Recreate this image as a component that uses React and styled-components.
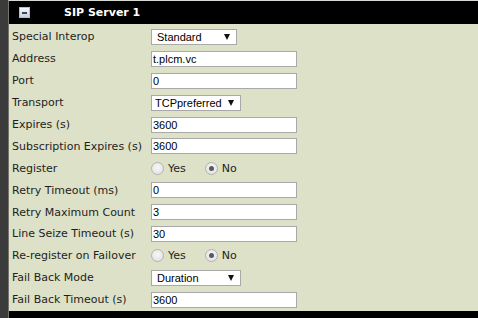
import styled, { createGlobalStyle } from "styled-components";

const Global = createGlobalStyle`
  html, body {
    margin: 0;
    padding: 0;
    background: #3b3b3b;
    height: 100%;
    overflow: hidden;
  }
`;

const Panel = styled.div`
  margin: 0 0 0 8px;
  border-top: 1px solid #d9d9d4;
  border-left: 1px solid #74746c;
  font-family: "DejaVu Sans", Verdana, sans-serif;
  font-size: 11px;
  color: #1e1e22;
`;

const Header = styled.div`
  height: 23px;
  background: #000;
  display: flex;
  align-items: center;
  padding-left: 10px;
`;

const Toggle = styled.span`
  width: 9px;
  height: 9px;
  border: 1px solid #b4bfd4;
  background: linear-gradient(#f5f7fc, #c6d0e2);
  display: flex;
  align-items: center;
  justify-content: center;

  &::after {
    content: "";
    width: 5px;
    height: 2px;
    background: #3c4459;
  }
`;

const Title = styled.span`
  color: #fff;
  font-weight: bold;
  margin-left: 34px;
`;

const Body = styled.div`
  background: #dde1c7;
  padding: 2px 0 0 3px;
`;

const Row = styled.div`
  height: 21.9px;
  display: flex;
  align-items: center;
`;

const Label = styled.span`
  width: 139px;
  flex: none;
  white-space: nowrap;
`;

const TextBox = styled.div`
  box-sizing: border-box;
  width: 146px;
  height: 16px;
  border: 1px solid #a9a9a9;
  background: #fff;
  padding-left: 1px;
  font-family: "Liberation Sans", Arial, sans-serif;
  font-size: 11px;
  line-height: 14px;
  color: #000;
`;

const Select = styled.div`
  box-sizing: border-box;
  width: ${(p) => p.$w}px;
  height: 16px;
  border: 1px solid #a9a9a9;
  background: #fff;
  padding: 0 6px 0 ${(p) => p.$pad || 5}px;
  display: flex;
  align-items: center;
  justify-content: space-between;
  font-family: "Liberation Sans", Arial, sans-serif;
  font-size: 11px;
  color: #000;
  white-space: nowrap;
`;

const Arrow = styled.span`
  width: 0;
  height: 0;
  border-left: 3px solid transparent;
  border-right: 3px solid transparent;
  border-top: 6px solid #111;
`;

const RadioGroup = styled.div`
  display: flex;
  align-items: center;
`;

const Option = styled.span`
  display: inline-flex;
  align-items: center;
  gap: 4px;
  margin-right: 19px;
`;

const Radio = styled.span`
  box-sizing: border-box;
  width: 13px;
  height: 13px;
  border-radius: 50%;
  border: 1px solid #b3b3b3;
  background: radial-gradient(circle at 50% 40%, #f7f7f7, #dedede);
  display: flex;
  align-items: center;
  justify-content: center;

  &::after {
    content: "";
    width: 5px;
    height: 5px;
    border-radius: 50%;
    background: ${(p) => (p.$on ? "#5a5a5a" : "transparent")};
  }
`;

const Footer = styled.div`
  height: 10px;
  background: #000;
`;

const YesNo = ({ value }) => (
  <RadioGroup>
    <Option>
      <Radio $on={value === "yes"} />
      Yes
    </Option>
    <Option>
      <Radio $on={value === "no"} />
      No
    </Option>
  </RadioGroup>
);

const Choice = ({ w, pad, children }) => (
  <Select $w={w} $pad={pad}>
    <span>{children}</span>
    <Arrow />
  </Select>
);

const rows = [
  ["Special Interop", <Choice w={86}>Standard</Choice>],
  ["Address", <TextBox>t.plcm.vc</TextBox>],
  ["Port", <TextBox>0</TextBox>],
  ["Transport", <Choice w={90} pad={3}>TCPpreferred</Choice>],
  ["Expires (s)", <TextBox>3600</TextBox>],
  ["Subscription Expires (s)", <TextBox>3600</TextBox>],
  ["Register", <YesNo value="no" />],
  ["Retry Timeout (ms)", <TextBox>0</TextBox>],
  ["Retry Maximum Count", <TextBox>3</TextBox>],
  ["Line Seize Timeout (s)", <TextBox>30</TextBox>],
  ["Re-register on Failover", <YesNo value="no" />],
  ["Fail Back Mode", <Choice w={90}>Duration</Choice>],
  ["Fail Back Timeout (s)", <TextBox>3600</TextBox>],
];

export default function App() {
  return (
    <>
      <Global />
      <Panel>
        <Header>
          <Toggle />
          <Title>SIP Server 1</Title>
        </Header>
        <Body>
          {rows.map(([label, control]) => (
            <Row key={label}>
              <Label>{label}</Label>
              {control}
            </Row>
          ))}
        </Body>
        <Footer />
      </Panel>
    </>
  );
}
